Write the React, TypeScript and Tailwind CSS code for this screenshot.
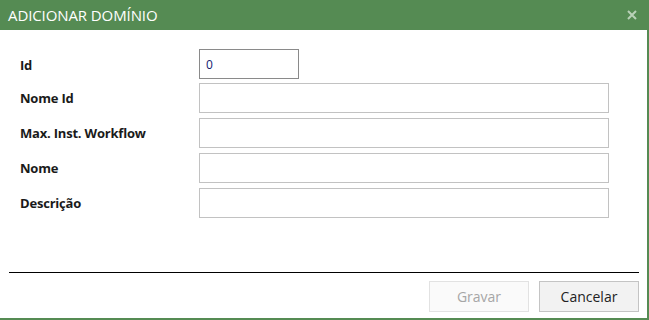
import React from 'react';

const FIELDS = [
  { label: 'Nome Id' },
  { label: 'Max. Inst. Workflow' },
  { label: 'Nome' },
  { label: 'Descrição' },
];

const App: React.FC = () => {
  return (
    <div className="w-[649px] h-[320px] bg-white border-r-2 border-b-2 border-[#558b53] flex flex-col font-['Segoe_UI','Open_Sans',sans-serif] text-[#1a1a1a]">
      {/* Header */}
      <div className="h-[30px] shrink-0 bg-[#558b53] flex items-center justify-between pl-[8px] pr-[10px]">
        <span className="text-white text-[15px] tracking-[-0.1px]">ADICIONAR DOMÍNIO</span>
        <svg width="10" height="10" viewBox="0 0 10 10" className="text-[#b9d1b8]">
          <path d="M1 1 L9 9 M9 1 L1 9" stroke="currentColor" strokeWidth="2" />
        </svg>
      </div>

      {/* Form */}
      <div className="flex flex-col pt-[19px]">
        <div className="flex items-center h-[30px] mb-[4px]">
          <label className="w-[199px] pl-[20px] pt-[4px] text-[13px] font-bold tracking-[-0.2px]">Id</label>
          <input
            defaultValue="0"
            className="w-[100px] h-[30px] border border-[#8a8a8a] px-[6px] text-[12px] text-[#14206e] outline-none"
          />
        </div>
        <div className="flex flex-col gap-[5px]">
          {FIELDS.map((f) => (
            <div key={f.label} className="flex items-center h-[30px]">
              <label className="w-[199px] pl-[20px] pt-[2px] text-[13px] font-bold tracking-[-0.2px]">{f.label}</label>
              <input className="w-[410px] h-[30px] border border-[#c2c2c2] px-[6px] text-[12px] outline-none" />
            </div>
          ))}
        </div>
      </div>

      {/* Footer */}
      <div className="mt-[54px] mx-[9px] w-[630px] h-px bg-black" />
      <div className="flex justify-end gap-[10px] pr-[8px] mt-[8px]">
        <button
          disabled
          className="w-[100px] h-[31px] border border-[#e2e2e2] bg-[#fafafa] text-[14px] text-[#a6a6a6]"
        >
          Gravar
        </button>
        <button className="w-[100px] h-[31px] border border-[#c4c4c4] bg-[#f2f2f2] text-[14px] text-[#222]">
          Cancelar
        </button>
      </div>
    </div>
  );
};

export default App;
